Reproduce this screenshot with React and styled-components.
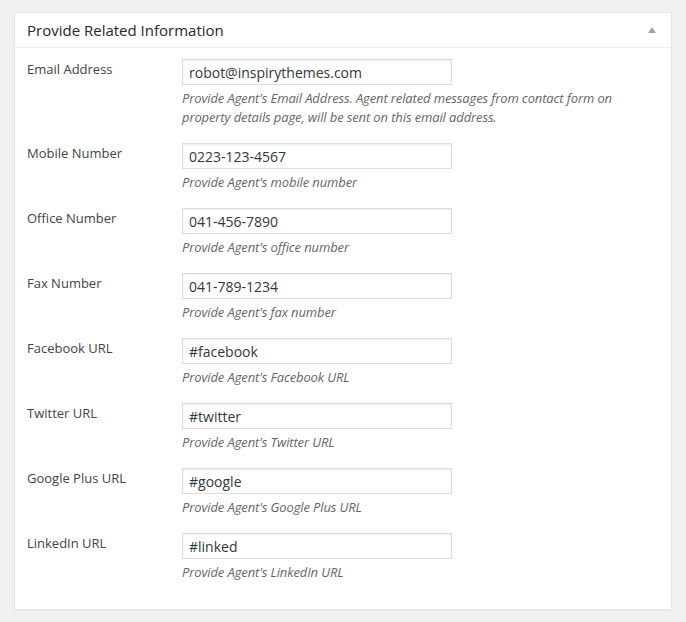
import styled, { createGlobalStyle } from 'styled-components';

const GlobalStyle = createGlobalStyle`
  html, body {
    margin: 0;
    padding: 0;
    background: #f1f1f1;
  }
  body {
    font-family: 'Open Sans', 'Liberation Sans', sans-serif;
    color: #444;
  }
  * {
    box-sizing: border-box;
  }
`;

const fields = [
  {
    label: 'Email Address',
    value: 'robot@inspirythemes.com',
    desc: "Provide Agent's Email Address. Agent related messages from contact form on property details page, will be sent on this email address.",
  },
  { label: 'Mobile Number', value: '0223-123-4567', desc: "Provide Agent's mobile number" },
  { label: 'Office Number', value: '041-456-7890', desc: "Provide Agent's office number" },
  { label: 'Fax Number', value: '041-789-1234', desc: "Provide Agent's fax number" },
  { label: 'Facebook URL', value: '#facebook', desc: "Provide Agent's Facebook URL" },
  { label: 'Twitter URL', value: '#twitter', desc: "Provide Agent's Twitter URL" },
  { label: 'Google Plus URL', value: '#google', desc: "Provide Agent's Google Plus URL" },
  { label: 'LinkedIn URL', value: '#linked', desc: "Provide Agent's LinkedIn URL" },
];

const App = () => {
  return (
    <Page>
      <GlobalStyle />
      <Postbox>
        <Header>
          <Title>Provide Related Information</Title>
          <Toggle />
        </Header>
        <Inside>
          {fields.map((f) => (
            <FieldRow key={f.label}>
              <Label>{f.label}</Label>
              <InputCell>
                <TextInput type="text" defaultValue={f.value} />
                <Description>{f.desc}</Description>
              </InputCell>
            </FieldRow>
          ))}
        </Inside>
      </Postbox>
    </Page>
  );
};

export default App;

const Page = styled.div`
  padding: 12px 14px 12px 14px;
  min-height: 622px;
`;

const Postbox = styled.div`
  background: #fff;
  border: 1px solid #e5e5e5;
  box-shadow: 0 1px 1px rgba(0, 0, 0, 0.04);
`;

const Header = styled.div`
  display: flex;
  align-items: center;
  justify-content: space-between;
  height: 35px;
  padding: 0 12px;
  border-bottom: 1px solid #eee;
`;

const Title = styled.h3`
  margin: 0;
  font-size: 15px;
  font-weight: 400;
  color: #23282d;
  line-height: 1.4;
`;

const Toggle = styled.span`
  width: 0;
  height: 0;
  margin-right: 3px;
  border-left: 4px solid transparent;
  border-right: 4px solid transparent;
  border-bottom: 6px solid #a0a5aa;
`;

const Inside = styled.div`
  padding: 11px 12px 11px 12px;
`;

const FieldRow = styled.div`
  display: flex;
  padding-bottom: 16px;
`;

const Label = styled.label`
  width: 155px;
  flex-shrink: 0;
  font-size: 13px;
  line-height: 20px;
  color: #444;
`;

const InputCell = styled.div`
  flex: 1;
  display: flex;
  flex-direction: column;
`;

const TextInput = styled.input`
  width: 270px;
  height: 26px;
  padding: 0 6px;
  border: 1px solid #ddd;
  box-shadow: inset 0 1px 2px rgba(0, 0, 0, 0.07);
  font-family: 'Open Sans', 'Liberation Sans', sans-serif;
  font-size: 14px;
  color: #32373c;
  background: #fff;
  outline: none;
`;

const Description = styled.p`
  margin: 4px 0 0 0;
  font-size: 13px;
  font-style: italic;
  line-height: 19px;
  letter-spacing: -0.12px;
  color: #666;
`;
